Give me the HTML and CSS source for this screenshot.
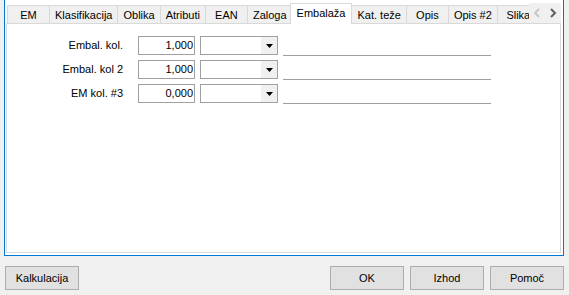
FILE: index.html
```html
<!DOCTYPE html>
<html lang="sl">

<head>
	<meta charset="UTF-8">
	<title>Artikel</title>
	<link rel="stylesheet" href="styles.css">
</head>

<body>
	<div class="frame">
		<div class="tabs">
			<div class="tab-list">
				<div class="tab">EM</div>
				<div class="tab">Klasifikacija</div>
				<div class="tab">Oblika</div>
				<div class="tab">Atributi</div>
				<div class="tab">EAN</div>
				<div class="tab">Zaloga</div>
				<div class="tab active">Embalaža</div>
				<div class="tab">Kat. teže</div>
				<div class="tab">Opis</div>
				<div class="tab">Opis #2</div>
				<div class="tab">Slika</div>
			</div>
			<div class="tab-scroll">
				<svg width="8" height="10" viewBox="0 0 8 10"><path d="M6 1 L2 5 L6 9" fill="none" stroke="#c8c8c8" stroke-width="2"/></svg>
				<svg width="8" height="10" viewBox="0 0 8 10"><path d="M2 1 L6 5 L2 9" fill="none" stroke="#606060" stroke-width="2"/></svg>
			</div>
		</div>
		<div class="page">
			<div class="form">
				<label class="lbl">Embal. kol.</label>
				<div class="num">1,000</div>
				<div class="combo"><span class="drop"><svg width="7" height="4" viewBox="0 0 7 4"><polygon points="0,0 7,0 3.5,4" fill="#000"/></svg></span></div>
				<div class="line"></div>

				<label class="lbl">Embal. kol 2</label>
				<div class="num">1,000</div>
				<div class="combo"><span class="drop"><svg width="7" height="4" viewBox="0 0 7 4"><polygon points="0,0 7,0 3.5,4" fill="#000"/></svg></span></div>
				<div class="line"></div>

				<label class="lbl">EM kol. #3</label>
				<div class="num">0,000</div>
				<div class="combo"><span class="drop"><svg width="7" height="4" viewBox="0 0 7 4"><polygon points="0,0 7,0 3.5,4" fill="#000"/></svg></span></div>
				<div class="line"></div>
			</div>
		</div>
	</div>
	<div class="buttons">
		<button>Kalkulacija</button>
		<button class="first-right">OK</button>
		<button>Izhod</button>
		<button>Pomoč</button>
	</div>
</body>

</html>
```

FILE: styles.css
```css
html,
body {
	margin: 0;
	background: #f0f0f0;
	font: 11px "Liberation Sans", Arial, sans-serif;
	color: #000;
}

body {
	width: 569px;
	height: 295px;
	overflow: hidden;
}

.frame {
	box-sizing: border-box;
	margin-left: 4px;
	width: 560px;
	height: 256px;
	border: 1px solid #0078d7;
	border-top: 0;
	padding: 3px 2px 2px 1px;
	display: flex;
	flex-direction: column;
	background: #fff;
}

.tabs {
	display: flex;
	align-items: flex-start;
	height: 20px;
	flex: none;
	position: relative;
	z-index: 1;
}

.tab-list {
	display: flex;
	align-items: flex-start;
	flex: 1;
	height: 21px;
	overflow: hidden;
	padding-left: 1px;
}

.tab {
	box-sizing: border-box;
	flex: none;
	height: 18px;
	min-width: 43px;
	margin-top: 2px;
	margin-right: -1px;
	padding: 0 5px;
	border: 1px solid #d9d9d9;
	border-bottom: 0;
	background: #f0f0f0;
	display: flex;
	align-items: center;
	justify-content: center;
	white-space: nowrap;
}

.tab.active {
	height: 21px;
	margin: 0 -1px 0 -2px;
	padding: 0 6px 2px;
	background: #fff;
	position: relative;
	z-index: 2;
}

.tab-scroll {
	width: 32px;
	height: 20px;
	display: flex;
	align-items: center;
	justify-content: space-around;
	background: #f0f0f0;
}

.page {
	flex: 1;
	border: 1px solid #d9d9d9;
	background: #fff;
	padding-top: 12px;
}

.form {
	display: grid;
	grid-template-columns: 126px 57px 78px 208px;
	grid-auto-rows: 19px;
	column-gap: 5px;
	row-gap: 5px;
}

.lbl {
	text-align: right;
	padding-right: 10px;
	line-height: 19px;
}

.num {
	box-sizing: border-box;
	border: 1px solid #a0a0a0;
	text-align: right;
	padding-right: 1px;
	line-height: 17px;
}

.combo {
	box-sizing: border-box;
	border: 1px solid #a0a0a0;
	display: flex;
	justify-content: flex-end;
}

.drop {
	width: 16px;
	background: #f0f0f0;
	display: flex;
	align-items: center;
	justify-content: center;
}

.line {
	box-sizing: border-box;
	align-self: start;
	height: 20px;
	border-bottom: 1px solid #a0a0a0;
}

.buttons {
	display: flex;
	gap: 6px;
	padding: 10px 5px 0;
}

button {
	box-sizing: border-box;
	width: 74px;
	height: 24px;
	padding: 0;
	border: 1px solid #adadad;
	background: #e1e1e1;
	font: inherit;
	color: #000;
}

.first-right {
	margin-left: auto;
}
```
